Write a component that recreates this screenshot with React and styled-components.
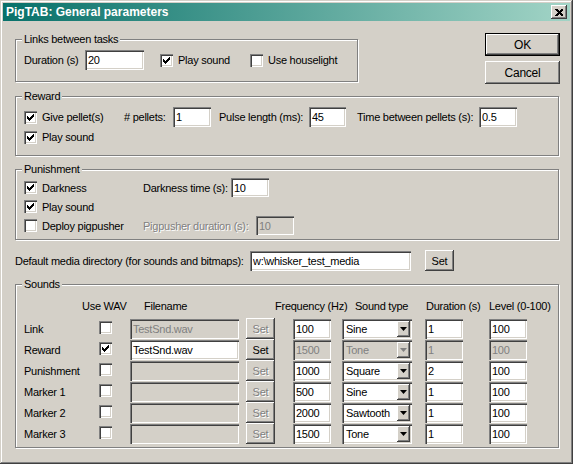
import React from 'react';
import styled, { createGlobalStyle } from 'styled-components';

const Global = createGlobalStyle`
  body {
    margin: 0;
    background: #d4d0c8;
    font-family: "Liberation Sans", Arial, sans-serif;
    font-size: 11px;
    letter-spacing: -0.25px;
  }
`;

const raised = `
  box-shadow: inset -1px -1px #404040, inset 1px 1px #ffffff, inset -2px -2px #808080;
`;
const sunken = `
  box-shadow: inset 1px 1px #808080, inset 2px 2px #404040, inset -1px -1px #ffffff, inset -2px -2px #d4d0c8;
`;

const Window = styled.div`
  width: 573px;
  height: 464px;
  box-sizing: border-box;
  padding: 3px;
  background: #d4d0c8;
  box-shadow: inset -1px -1px #404040, inset 1px 1px #d4d0c8, inset -2px -2px #808080, inset 2px 2px #ffffff;
  display: flex;
  flex-direction: column;
`;

const TitleBar = styled.div`
  height: 18px;
  flex: none;
  display: flex;
  align-items: center;
  padding: 0 3px;
  background: linear-gradient(to right, #08716a, #a2d4c6);
  color: #fff;
  font-weight: bold;
  font-size: 12px;
  letter-spacing: 0;
`;

const CloseButton = styled.div`
  margin-left: auto;
  width: 16px;
  height: 14px;
  background: #d4d0c8;
  display: flex;
  align-items: center;
  justify-content: center;
  ${raised}
`;

const Body = styled.div`
  padding: 12px 10px 0 12px;
  display: flex;
  flex-direction: column;
`;

const TopRow = styled.div`
  display: flex;
  height: 51px;
`;

const ButtonColumn = styled.div`
  margin-left: auto;
  display: flex;
  flex-direction: column;
  gap: 5px;
`;

const Group = styled.div`
  position: relative;
  box-sizing: border-box;
  width: ${p => p.$w || 544}px;
  height: ${p => p.$h}px;
  margin-top: ${p => p.$mt || 0}px;
  border: 1px solid #808080;
  box-shadow: inset 1px 1px #ffffff, 1px 1px #ffffff;
  padding: ${p => p.$pt || 10}px 8px 0 8px;
  display: flex;
  flex-direction: column;
`;

const Caption = styled.span`
  position: absolute;
  top: -7px;
  left: 6px;
  padding: 0 2px;
  line-height: 13px;
  background: #d4d0c8;
`;

const Row = styled.div`
  display: flex;
  align-items: center;
  height: ${p => p.$h || 20}px;
  flex: none;
  margin-top: ${p => p.$mt || 0}px;
`;

const Text = styled.span`
  white-space: nowrap;
  flex: none;
  width: ${p => (p.$w ? `${p.$w}px` : 'auto')};
  margin-left: ${p => p.$ml || 0}px;
  color: ${p => (p.$disabled ? '#808080' : '#000')};
  text-shadow: ${p => (p.$disabled ? '1px 1px #ffffff' : 'none')};
`;

const Field = styled.input`
  box-sizing: border-box;
  flex: none;
  width: ${p => p.$w}px;
  height: ${p => p.$h || 20}px;
  margin-left: ${p => p.$ml || 0}px;
  border: none;
  outline: none;
  padding: 0 3px;
  font: inherit;
  letter-spacing: inherit;
  color: ${p => (p.disabled ? '#808080' : '#000')};
  background: ${p => (p.disabled ? '#d4d0c8' : '#ffffff')};
  ${sunken}
`;

const Button = styled.button`
  box-sizing: border-box;
  flex: none;
  width: ${p => p.$w}px;
  height: ${p => p.$h}px;
  margin-left: ${p => p.$ml || 0}px;
  padding: 0;
  font: inherit;
  letter-spacing: inherit;
  font-size: ${p => p.$fs || 11}px;
  background: #d4d0c8;
  border: ${p => (p.$default ? '1px solid #000' : 'none')};
  color: ${p => (p.disabled ? '#808080' : '#000')};
  text-shadow: ${p => (p.disabled ? '1px 1px #ffffff' : 'none')};
  ${raised}
`;

const CheckLabel = styled.label`
  display: flex;
  align-items: center;
  gap: 5px;
  flex: none;
  width: ${p => (p.$w ? `${p.$w}px` : 'auto')};
  margin-left: ${p => p.$ml || 0}px;
`;

const Box = styled.span`
  width: 13px;
  height: 13px;
  flex: none;
  box-sizing: border-box;
  background: #ffffff;
  display: block;
  margin-bottom: ${p => p.$lift || 0}px;
  ${sunken}
`;

const ComboBox = styled.div`
  box-sizing: border-box;
  width: 70px;
  height: 20px;
  padding: 2px;
  display: flex;
  align-items: center;
  background: ${p => (p.$disabled ? '#d4d0c8' : '#ffffff')};
  color: ${p => (p.$disabled ? '#808080' : '#000')};
  ${sunken}
`;

const ComboText = styled.span`
  padding-left: 2px;
  flex: 1;
`;

const ArrowButton = styled.span`
  width: 13px;
  height: 16px;
  flex: none;
  background: #d4d0c8;
  display: flex;
  align-items: center;
  justify-content: center;
  ${raised}
`;

const Header = styled.div`
  display: flex;
  align-items: center;
  height: 20px;
  margin-bottom: 2px;
`;

const SoundGrid = styled.div`
  display: grid;
  grid-template-columns: 75px 31px 116px 47px 49px 83px 64px 38px;
  grid-auto-rows: 21px;
  align-items: center;
`;

const Check = ({ checked, lift }) => (
  <Box $lift={lift}>
    {checked && (
      <svg width="13" height="13" viewBox="0 0 13 13" shapeRendering="crispEdges">
        <polygon points="3,5 5,7 10,2 10,5 5,10 3,8" fill="#000" />
      </svg>
    )}
  </Box>
);

const CheckItem = ({ checked, w, ml, children }) => (
  <CheckLabel $w={w} $ml={ml}>
    <Check checked={checked} />
    <Text>{children}</Text>
  </CheckLabel>
);

const Combo = ({ value, disabled }) => (
  <ComboBox $disabled={disabled}>
    <ComboText>{value}</ComboText>
    <ArrowButton>
      <svg width="7" height="4" viewBox="0 0 7 4">
        <polygon points="0,0 7,0 3.5,4" fill={disabled ? '#808080' : '#000'} />
      </svg>
    </ArrowButton>
  </ComboBox>
);

const sounds = [
  { name: 'Link', wav: false, file: 'TestSnd.wav', freq: '100', type: 'Sine', dur: '1', level: '100' },
  { name: 'Reward', wav: true, file: 'TestSnd.wav', freq: '1500', type: 'Tone', dur: '1', level: '100' },
  { name: 'Punishment', wav: false, file: '', freq: '1000', type: 'Square', dur: '2', level: '100' },
  { name: 'Marker 1', wav: false, file: '', freq: '500', type: 'Sine', dur: '1', level: '100' },
  { name: 'Marker 2', wav: false, file: '', freq: '2000', type: 'Sawtooth', dur: '1', level: '100' },
  { name: 'Marker 3', wav: false, file: '', freq: '1500', type: 'Tone', dur: '1', level: '100' },
];

export default function App() {
  return (
    <>
      <Global />
      <Window>
        <TitleBar>
          <span>PigTAB: General parameters</span>
          <CloseButton>
            <svg width="8" height="7" viewBox="0 0 8 7" shapeRendering="crispEdges">
              <path d="M0 0h2l2 2 2-2h2v1l-2.5 2.5L8 6v1H6L4 5 2 7H0V6l2.5-2.5L0 1z" fill="#000" />
            </svg>
          </CloseButton>
        </TitleBar>
        <Body>
          <TopRow>
            <Group $w={343} $h={43} $mt={6}>
              <Caption>Links between tasks</Caption>
              <Row>
                <Text $w={61}>Duration (s)</Text>
                <Field $w={59} defaultValue="20" />
                <CheckItem checked w={90} ml={16}>Play sound</CheckItem>
                <CheckItem>Use houselight</CheckItem>
              </Row>
            </Group>
            <ButtonColumn>
              <Button $default $w={75} $h={23} $fs={12}>OK</Button>
              <Button $w={75} $h={23} $fs={12}>Cancel</Button>
            </ButtonColumn>
          </TopRow>

          <Group $h={60} $mt={12}>
            <Caption>Reward</Caption>
            <Row>
              <CheckItem checked w={100}>Give pellet(s)</CheckItem>
              <Text $w={49}># pellets:</Text>
              <Field $w={38} defaultValue="1" />
              <Text $w={90} $ml={8}>Pulse length (ms):</Text>
              <Field $w={37} defaultValue="45" />
              <Text $w={122} $ml={11}>Time between pellets (s):</Text>
              <Field $w={38} defaultValue="0.5" />
            </Row>
            <Row>
              <CheckItem checked>Play sound</CheckItem>
            </Row>
          </Group>

          <Group $h={71} $mt={13} $pt={8}>
            <Caption>Punishment</Caption>
            <Row $h={19}>
              <CheckItem checked w={119}>Darkness</CheckItem>
              <Text $w={88}>Darkness time (s):</Text>
              <Field $w={38} $h={19} defaultValue="10" />
            </Row>
            <Row $h={19}>
              <CheckItem checked>Play sound</CheckItem>
            </Row>
            <Row $h={19}>
              <CheckItem w={119}>Deploy pigpusher</CheckItem>
              <Text $w={113} $disabled>Pigpusher duration (s):</Text>
              <Field $w={38} $h={19} disabled defaultValue="10" />
            </Row>
          </Group>

          <Row $h={21} $mt={10}>
            <Text $w={235}>Default media directory (for sounds and bitmaps):</Text>
            <Field $w={161} defaultValue="w:\whisker_test_media" />
            <Button $w={29} $h={21} $ml={14}>Set</Button>
          </Row>

          <Group $h={164} $mt={13} $pt={11}>
            <Caption>Sounds</Caption>
            <Header>
              <Text $w={58} />
              <Text $w={62}>Use WAV</Text>
              <Text $w={131}>Filename</Text>
              <Text $w={80}>Frequency (Hz)</Text>
              <Text $w={71}>Sound type</Text>
              <Text $w={63}>Duration (s)</Text>
              <Text>Level (0-100)</Text>
            </Header>
            <SoundGrid>
              {sounds.map(s => (
                <React.Fragment key={s.name}>
                  <Text>{s.name}</Text>
                  <Check checked={s.wav} lift={3} />
                  <Field $w={109} disabled={!s.wav} defaultValue={s.file} />
                  <Button $w={29} $h={21} disabled={!s.wav}>Set</Button>
                  <Field $w={38} disabled={s.wav} defaultValue={s.freq} />
                  <Combo value={s.type} disabled={s.wav} />
                  <Field $w={38} disabled={s.wav} defaultValue={s.dur} />
                  <Field $w={38} disabled={s.wav} defaultValue={s.level} />
                </React.Fragment>
              ))}
            </SoundGrid>
          </Group>
        </Body>
      </Window>
    </>
  );
}
